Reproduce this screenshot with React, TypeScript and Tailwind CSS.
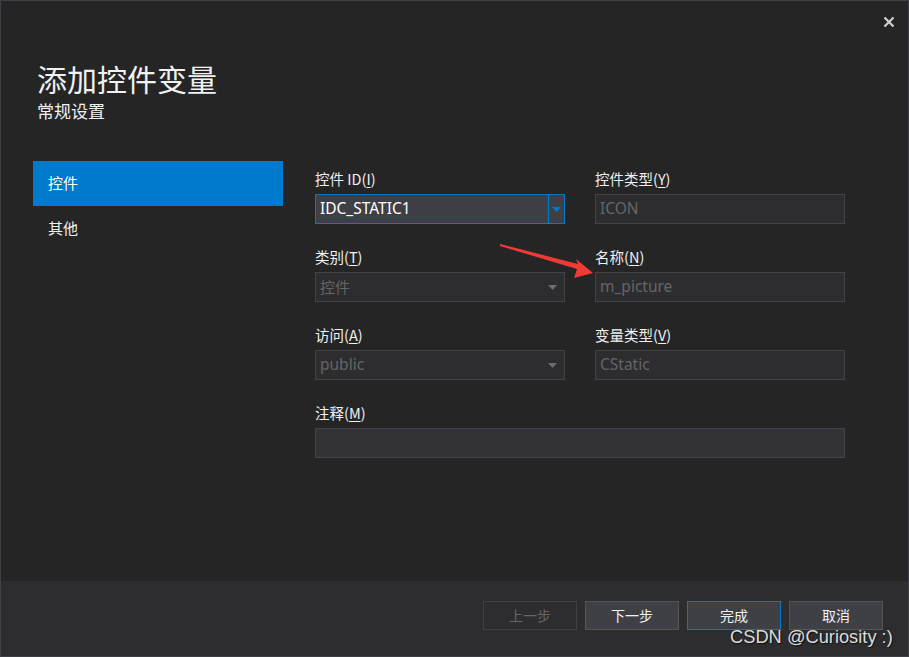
import React from "react";

const cjk = "font-['Noto_Sans_CJK_SC','Noto_Sans',sans-serif]";
const latin = "font-['Noto_Sans','Noto_Sans_CJK_SC',sans-serif]";

type FieldProps = {
  label: string;
  hotkey: string;
  children: React.ReactNode;
};

const Field = ({label, hotkey, children}: FieldProps) => (
  <div className="flex flex-col">
    <div className={`h-[17px] text-[14.5px] leading-[17px] text-[#f1f1f1] mb-[7px] ${cjk}`}>
      {label}(<span className="underline underline-offset-2">{hotkey}</span>)
    </div>
    {children}
  </div>
);

const Arrow = ({color}: {color: string}) => (
  <svg width="9" height="5" viewBox="0 0 9 5">
    <polygon points="0,0 9,0 4.5,5" fill={color}/>
  </svg>
);

const DisabledBox = ({value, combo}: {value: string; combo?: boolean}) => (
  <div className="h-[30px] bg-[#2d2d30] border border-[#434346] flex items-center justify-between pl-[4px] pr-[7px]">
    <span className={`text-[15.5px] text-[#656565] ${latin}`}>{value}</span>
    {combo && <Arrow color="#6d6d6d"/>}
  </div>
);

const Button = ({text, variant}: {text: string; variant?: 'disabled' | 'primary'}) => {
  const cls = variant === 'disabled'
    ? 'bg-[#2d2d30] border-[#3f3f46] text-[#656565]'
    : variant === 'primary'
      ? 'bg-[#3f3f46] border-[#007acc] text-[#f1f1f1]'
      : 'bg-[#3f3f46] border-[#555558] text-[#f1f1f1]';
  return (
    <div className={`w-[94px] h-[29px] border flex items-center justify-center text-[14px] ${cjk} ${cls}`}>
      {text}
    </div>
  );
};

export default function App() {
  return (
    <div className="relative w-[909px] h-[657px] bg-[#252526] border border-[#3f3f46] flex flex-col overflow-hidden">
      {/* close */}
      <svg className="absolute left-[882px] top-[15px]" width="12" height="12" viewBox="0 0 12 12">
        <path d="M1.5 1.5 L10.5 10.5 M10.5 1.5 L1.5 10.5" stroke="#d0d0d0" strokeWidth="2.2"/>
      </svg>

      <div className="pt-[59px] pl-[36px]">
        <div className={`text-[30px] leading-[36px] text-[#f1f1f1] ${cjk}`}>添加控件变量</div>
        <div className={`text-[17px] leading-[22px] mt-[4px] text-[#f1f1f1] ${cjk}`}>常规设置</div>
      </div>

      <div className="flex-1 flex mt-[39px]">
        <div className="ml-[32px] w-[250px] flex flex-col">
          <div className={`h-[45px] bg-[#007acc] flex items-center pl-[15px] text-[15px] text-white ${cjk}`}>控件</div>
          <div className={`h-[45px] flex items-center pl-[15px] text-[15px] text-[#f1f1f1] ${cjk}`}>其他</div>
        </div>

        <div className="ml-[32px] mt-[9px] w-[530px] grid grid-cols-2 gap-x-[30px] gap-y-[24px] content-start">
          <Field label="控件 ID" hotkey="I">
            <div className="h-[30px] bg-[#3f3f46] border border-[#007acc] flex">
              <div className={`flex-1 flex items-center pl-[4px] text-[15.5px] text-white ${latin}`}>IDC_STATIC1</div>
              <div className="w-[16px] border-l border-[#007acc] flex items-center justify-center">
                <Arrow color="#007acc"/>
              </div>
            </div>
          </Field>
          <Field label="控件类型" hotkey="Y">
            <DisabledBox value="ICON"/>
          </Field>
          <Field label="类别" hotkey="T">
            <div className="h-[30px] bg-[#2d2d30] border border-[#434346] flex items-center justify-between pl-[4px] pr-[7px]">
              <span className={`text-[15px] text-[#656565] ${cjk}`}>控件</span>
              <Arrow color="#6d6d6d"/>
            </div>
          </Field>
          <Field label="名称" hotkey="N">
            <DisabledBox value="m_picture"/>
          </Field>
          <Field label="访问" hotkey="A">
            <DisabledBox value="public" combo/>
          </Field>
          <Field label="变量类型" hotkey="V">
            <DisabledBox value="CStatic"/>
          </Field>
          <div className="col-span-2">
            <Field label="注释" hotkey="M">
              <div className="h-[30px] bg-[#333337] border border-[#434346]"/>
            </Field>
          </div>
        </div>
      </div>

      <div className="h-[75px] bg-[#2d2d30] flex justify-end gap-[8px] pt-[20px] pr-[25px]">
        <Button text="上一步" variant="disabled"/>
        <Button text="下一步"/>
        <Button text="完成" variant="primary"/>
        <Button text="取消"/>
      </div>

      {/* annotation arrow */}
      <svg className="absolute left-0 top-0 pointer-events-none" width="909" height="657">
        <polygon points="499,243 577,263 575,258 592,272 573,277 576,268 499,245" fill="#f03a35"/>
      </svg>

      {/* watermark */}
      <div className="absolute left-[729px] top-[623px] text-[18.3px] leading-[26px] text-[#dcdcdc] font-['Liberation_Sans',sans-serif] [text-shadow:1px_1px_1px_rgba(0,0,0,0.7)]">
        CSDN @Curiosity :)
      </div>
    </div>
  );
}
